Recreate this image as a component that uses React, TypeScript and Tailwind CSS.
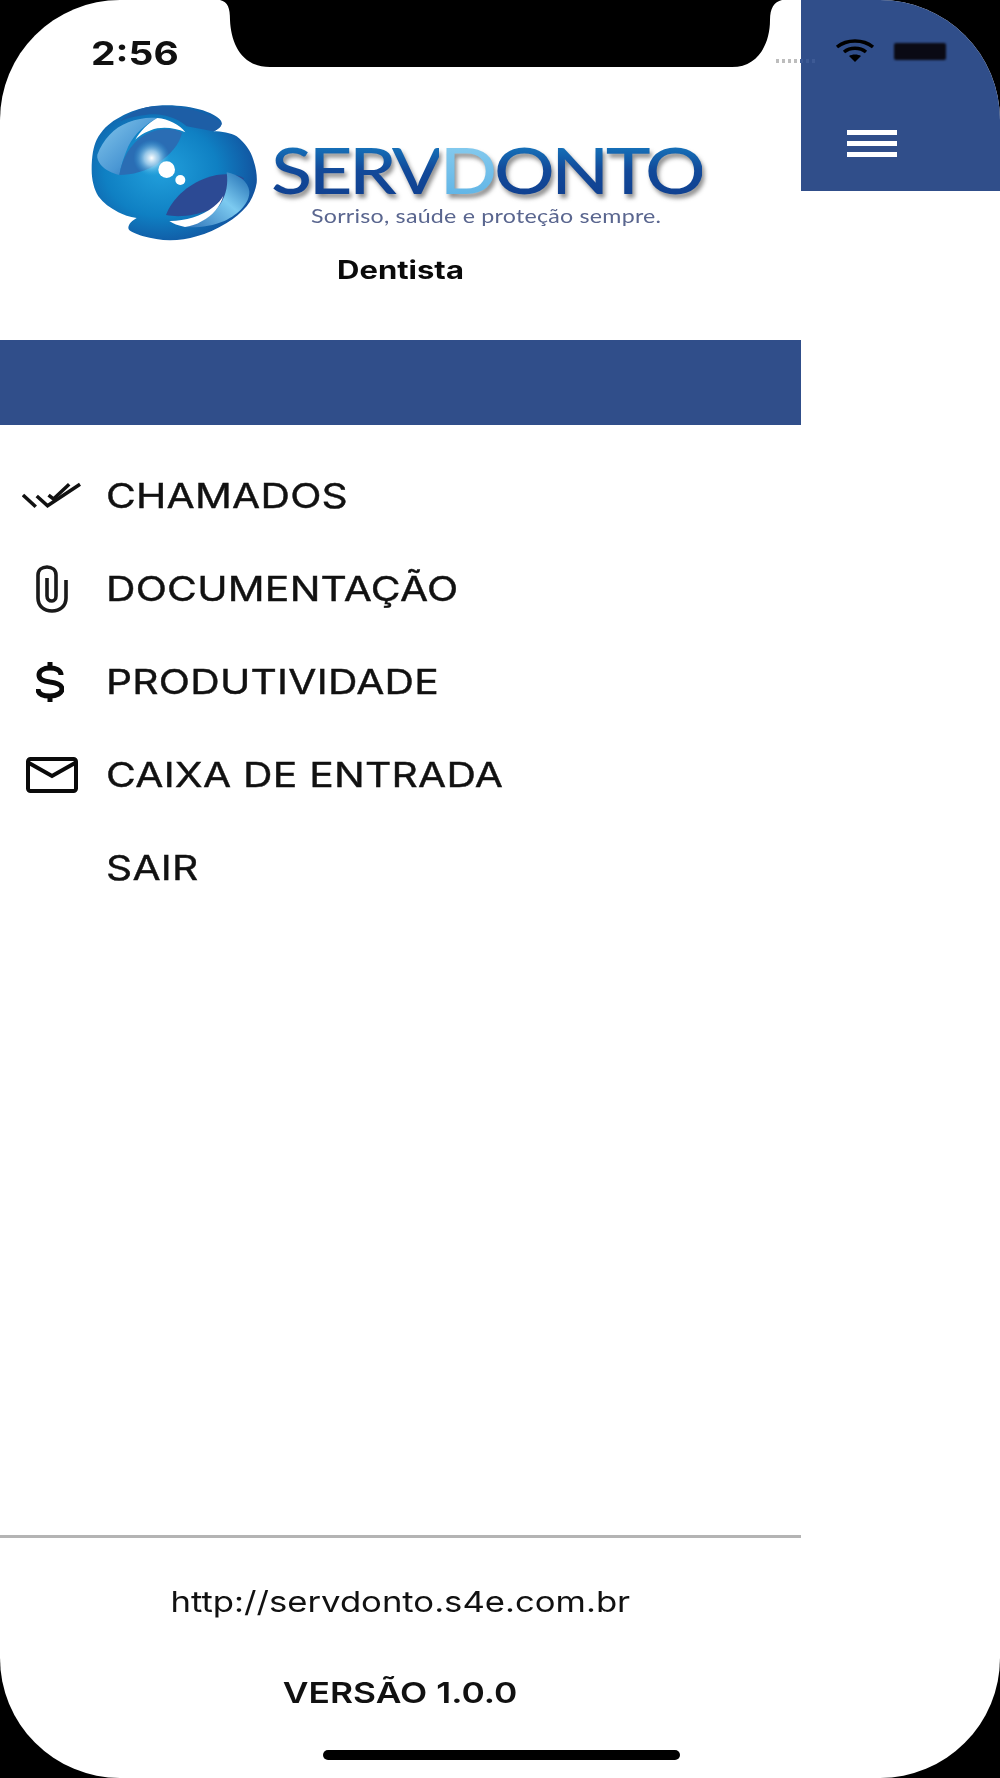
import React from "react";

const sans = "font-['Inter','Liberation_Sans',sans-serif]";

function Globe() {
  return (
    <svg width="170" height="140" viewBox="60 40 510 420" className="block shrink-0">
      <defs>
        <radialGradient id="g1" cx="0.42" cy="0.48" r="0.62">
          <stop offset="0" stopColor="#22a0dc" />
          <stop offset="0.55" stopColor="#0f80c3" />
          <stop offset="1" stopColor="#124d9a" />
        </radialGradient>
        <linearGradient id="c1" x1="0" y1="0" x2="1" y2="1">
          <stop offset="0" stopColor="#86c8ec" />
          <stop offset="0.6" stopColor="#4a97d4" />
          <stop offset="1" stopColor="#1c5ea8" />
        </linearGradient>
        <linearGradient id="c2" x1="0" y1="1" x2="1" y2="0">
          <stop offset="0" stopColor="#2f73b8" />
          <stop offset="0.55" stopColor="#7ccaf0" />
          <stop offset="1" stopColor="#1d6ab0" />
        </linearGradient>
        <radialGradient id="glow" cx="0.5" cy="0.5" r="0.5">
          <stop offset="0" stopColor="#ffffff" />
          <stop offset="0.4" stopColor="#b8e3f8" stopOpacity="0.75" />
          <stop offset="1" stopColor="#2aa7e0" stopOpacity="0" />
        </radialGradient>
      </defs>
      <path
        d="M65 240 C65 200 70 170 80 150 C95 122 115 102 140 88 C170 70 200 58 230 53 C260 47 290 46 320 48 C355 50 395 58 420 70 C440 80 455 90 455 100 C455 112 442 120 430 125 C455 125 482 130 500 140 C525 160 543 185 550 210 C558 235 562 258 560 280 C556 305 545 330 530 350 C513 370 492 387 470 400 C440 418 410 432 380 440 C355 448 328 452 300 452 C272 452 245 447 220 440 C200 433 175 425 175 415 C175 402 188 392 200 385 C178 382 160 376 145 368 C120 355 100 340 85 320 C72 298 65 270 65 240 Z"
        fill="url(#g1)"
      />
      <path d="M230 53 C290 44 400 55 455 100 C455 112 442 120 430 125 L350 110 C310 75 260 72 230 75 C200 78 170 85 150 95 C175 75 200 60 230 53 Z" fill="#1d5ea6" />
      <path
        d="M82 195 C100 150 130 115 175 98 C205 86 235 82 262 85 C225 105 195 130 175 170 C162 200 152 230 148 256 C125 250 105 240 92 225 C85 215 80 205 82 195 Z"
        fill="url(#c1)"
      />
      <path d="M262 85 C295 88 330 105 346 128 C320 116 290 112 262 116 C235 122 212 135 196 150 C210 125 235 100 262 85 Z" fill="#ffffff" />
      <path d="M148 256 C155 210 180 160 225 135 C262 115 310 112 336 130 C328 165 300 195 265 220 C230 245 185 256 148 256 Z" fill="#2a6db4" />
      <circle cx="245" cy="205" r="55" fill="url(#glow)" />
      <circle cx="290" cy="240" r="25" fill="#ffffff" />
      <circle cx="331" cy="271" r="15" fill="#ffffff" />
      <path d="M288 376 C305 330 350 285 410 264 C450 250 495 250 522 266 C505 300 470 335 425 358 C380 378 325 384 288 376 Z" fill="#2c4a94" />
      <path
        d="M470 248 C505 255 535 275 538 305 C540 340 505 375 465 393 C425 410 380 415 345 412 C385 405 425 380 450 345 C470 315 475 280 470 248 Z"
        fill="url(#c2)"
      />
      <path d="M298 394 C340 395 395 380 430 352 C445 340 455 328 460 318 C452 350 425 380 395 395 C380 405 360 410 345 412 C325 408 308 402 298 394 Z" fill="#ffffff" />
    </svg>
  );
}

function Logo() {
  return (
    <div className="flex items-start pl-[90px]">
      <Globe />
      <div className="ml-[11px] pt-[34px] w-[440px]">
        <div className="drop-shadow-[2px_4px_2px_rgba(70,70,70,0.6)] blur-[0.5px] w-max origin-left scale-x-[1.185] font-['Lato',sans-serif] font-medium text-[64px] leading-[66px] tracking-[-3px]">
          <span className="bg-gradient-to-b from-[#1b8dcf] via-[#124a9a] to-[#0f3c8c] bg-clip-text text-transparent">SERV</span>
          <span className="bg-gradient-to-b from-[#8ed0f0] to-[#58b0e4] bg-clip-text text-transparent">D</span>
          <span className="bg-gradient-to-b from-[#1b8dcf] via-[#124a9a] to-[#0f3c8c] bg-clip-text text-transparent">ONTO</span>
        </div>
        <div className="ml-[40px] mt-[0px] w-max origin-left scale-x-[1.16] blur-[0.5px] font-['Lato',sans-serif] text-[#5a668f] text-[20px] leading-[24px] tracking-[0.2px]">
          Sorriso, saúde e proteção sempre.
        </div>
      </div>
    </div>
  );
}

function IconCheck() {
  return (
    <svg width="60" height="30" viewBox="0 0 60 30" fill="none" stroke="#111" strokeWidth="3.6">
      <path d="M1 14 L14 26" />
      <path d="M15 15 L26 25 L59 3" />
      <path d="M27 14 L32 18 L48 3" />
    </svg>
  );
}
function IconClip() {
  return (
    <svg width="32" height="48" viewBox="0 0 32 48" fill="none" stroke="#1a1a1a" strokeWidth="3.6">
      <path d="M30 15 V33 C30 41 24 46 16 46 C8 46 2 41 2 33 V10 C2 5 6 2 11 2 C16 2 20 5 20 10 V31 C20 34 18 36 16 36 C13 36 11 34 11 31 V13" />
    </svg>
  );
}
function IconDollar() {
  return (
    <svg width="28" height="40" viewBox="0 0 28 40" fill="none" stroke="#0a0a0a" strokeWidth="5" className="mr-[4px]">
      <path d="M25 13 C25 8 20 6 14 6 C7 6 3 9 3 13 C3 18 8 19 14 20 C21 21 26 23 26 27 C26 31 21 34 14 34 C7 34 2 32 2 27" />
      <path d="M14 0 V6 M14 34 V40" />
    </svg>
  );
}
function IconMail() {
  return (
    <svg width="52" height="36" viewBox="0 0 52 36" fill="none" stroke="#0a0a0a" strokeWidth="4">
      <rect x="2" y="2" width="48" height="32" rx="2.5" />
      <path d="M3 6 L26 19 L49 6" />
    </svg>
  );
}

const items: { label: string; icon: React.ReactNode }[] = [
  { label: "CHAMADOS", icon: <IconCheck /> },
  { label: "DOCUMENTAÇÃO", icon: <IconClip /> },
  { label: "PRODUTIVIDADE", icon: <IconDollar /> },
  { label: "CAIXA DE ENTRADA", icon: <IconMail /> },
  { label: "SAIR", icon: null },
];

function StatusOverlay() {
  return (
    <>
      {/* notch */}
      <svg width="562" height="68" viewBox="0 0 562 68" className="absolute left-[220px] top-0">
        <path d="M0 0 C8 2 10 8 10 20 C11 44 22 67 50 67 H512 C538 67 550 44 550 20 C550 8 554 2 562 0 Z" fill="#000" />
      </svg>
      <div className={`absolute left-[91px] top-[33px] text-[33px] leading-[40px] font-bold text-[#111] origin-left scale-x-[1.18] ${sans}`}>
        2:56
      </div>
      <div className="absolute left-[776px] top-[59px] flex gap-[3px]">
        {[0, 1, 2, 3, 4, 5, 6].map((i) => (
          <span key={i} className={`w-[3px] h-[4px] ${i < 4 ? "bg-[#bdbdbd]" : "bg-[#3d5a95]"}`} />
        ))}
      </div>
      <svg width="40" height="24" viewBox="0 0 40 24" className="absolute left-[835px] top-[39px]" fill="none" stroke="#000" strokeWidth="3.5">
        <path d="M2 8 C12 0 28 0 38 8" />
        <path d="M9 13 C15 8 25 8 31 13" />
        <path d="M20 23 L14 17 C17 15 23 15 26 17 Z" fill="#000" stroke="none" />
      </svg>
      <div className="absolute left-[894px] top-[43px] w-[52px] h-[17px] rounded-[2px] bg-[#0a0a14] blur-[0.8px]" />
    </>
  );
}

export default function App() {
  return (
    <div className="w-[1000px] h-[1778px] bg-black">
      <div className="relative w-full h-full bg-white overflow-hidden rounded-[120px/120px] flex">
        <div className="w-[801px] shrink-0 flex flex-col">
          <div className="h-[340px] pt-[103px] flex flex-col">
            <Logo />
            <div className={`text-center mt-[13px] text-[25px] leading-[28px] font-bold text-[#0a0a0a] scale-x-[1.24] blur-[0.3px] ${sans}`}>
              Dentista
            </div>
          </div>
          <div className="h-[85px] bg-[#304e8a]" />
          <nav className="flex flex-col pt-[24px]">
            {items.map((it) => (
              <div key={it.label} className="h-[93px] flex items-center">
                <div className="w-[106px] pl-[22px] pr-[25px] shrink-0 flex items-center justify-center">{it.icon}</div>
                <span className={`origin-left scale-x-[1.2] whitespace-nowrap text-[34px] leading-[40px] text-[#111] font-normal tracking-[0.2px] blur-[0.35px] [-webkit-text-stroke:0.4px_#111] ${sans}`}>
                  {it.label}
                </span>
              </div>
            ))}
          </nav>
          <div className="flex-1" />
          <div className="h-[3px] bg-[#b4b4b4]" />
          <div className={`h-[240px] flex flex-col items-center text-[#111] ${sans}`}>
            <div className="mt-[46px] text-[29px] leading-[36px] scale-x-[1.195] whitespace-nowrap blur-[0.3px]">http://servdonto.s4e.com.br</div>
            <div className="mt-[55px] text-[29px] leading-[36px] font-semibold scale-x-[1.22] whitespace-nowrap blur-[0.3px]">VERSÃO 1.0.0</div>
          </div>
        </div>
        <div className="flex-1">
          <div className="h-[191px] bg-[#304e8a] pt-[130px] pl-[46px]">
            <div className="w-[50px] flex flex-col gap-[6px]">
              <span className="h-[5px] bg-white" />
              <span className="h-[5px] bg-white" />
              <span className="h-[5px] bg-white" />
            </div>
          </div>
        </div>
        <StatusOverlay />
        <div className="absolute left-[323px] top-[1750px] w-[357px] h-[10px] rounded-full bg-black" />
      </div>
    </div>
  );
}
